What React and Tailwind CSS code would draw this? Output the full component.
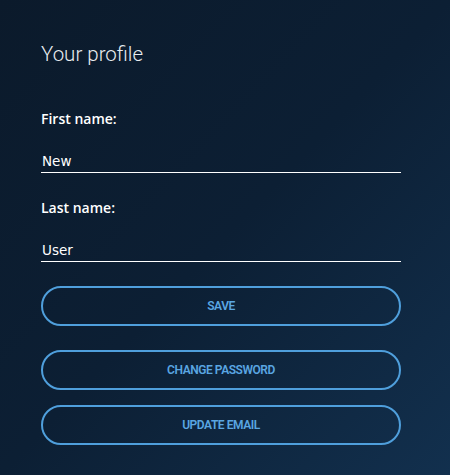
const fields = [
  { label: "First name:", value: "New" },
  { label: "Last name:", value: "User" },
];

function OutlineButton({ children, className = "" }) {
  return (
    <button
      className={`h-[40px] w-full rounded-full border-2 border-[#4f9fdc] text-[12px] font-semibold tracking-[-0.45px] text-[#5aa6e2] ${className}`}
    >
      {children}
    </button>
  );
}

export default function App() {
  return (
    <div
      className="min-h-[475px] w-full bg-gradient-to-br from-[#0b1a2b] via-[#0c1f34] to-[#12304e] pl-[41px] pt-[42px] font-['Roboto',sans-serif]"
    >
      <div className="flex w-[360px] flex-col">
        <h1 className="text-[20.5px] font-light leading-[24px] text-[#e8ecf0]">
          Your profile
        </h1>

        {fields.map(({ label, value }, index) => (
          <div key={label} className={index === 0 ? "mt-[43px]" : "mt-[25px]"}>
            <label className="block font-['Open_Sans',sans-serif] text-[14px] font-semibold leading-[20px] text-white">
              {label}
            </label>
            <input
              defaultValue={value}
              className="mt-[20px] block h-[24px] w-full border-b border-white bg-transparent px-[1px] font-['DejaVu_Sans',sans-serif] text-[13.5px] text-white outline-none"
            />
          </div>
        ))}

        <OutlineButton className="mt-[24px]">SAVE</OutlineButton>
        <OutlineButton className="mt-[24px]">CHANGE PASSWORD</OutlineButton>
        <OutlineButton className="mt-[15px]">UPDATE EMAIL</OutlineButton>
      </div>
    </div>
  );
}
